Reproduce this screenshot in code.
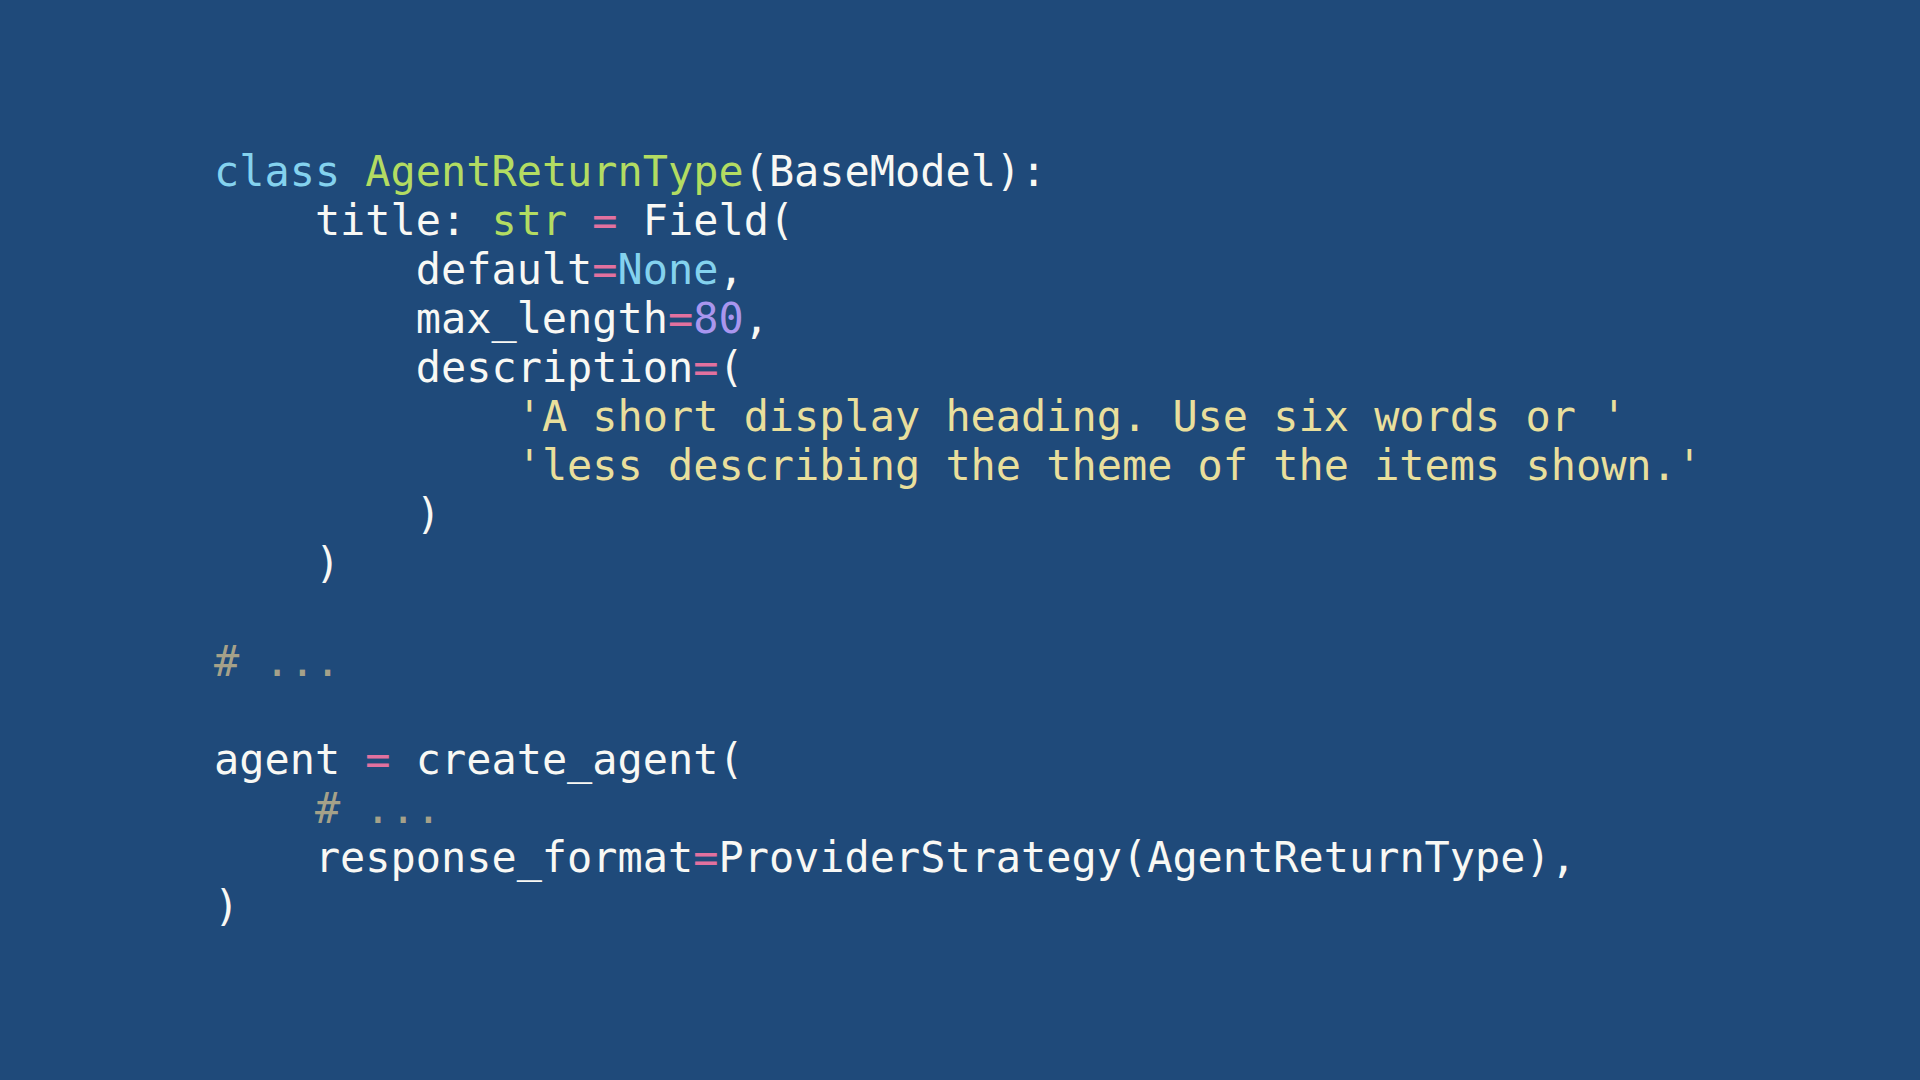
const kw = 'text-[#84d2ee]';
const cls = 'text-[#b3dc62]';
const op = 'text-[#e2719f]';
const num = 'text-[#a996ee]';
const str = 'text-[#e9df9c]';
const cmt = 'text-[#a5a189]';

const Line = ({ indent = 0, children }) => (
  <div className="h-[49px] whitespace-pre">
    {' '.repeat(indent * 4)}
    {children}
  </div>
);

export default function App() {
  return (
    <div className="w-[1920px] h-[1080px] bg-[#1f4a7a] text-[#f8f8f4] overflow-hidden">
      <div
        className="pt-[147px] pl-[214px] text-[41.9px] leading-[49px]"
        style={{ fontFamily: '"DejaVu Sans Mono", "Liberation Mono", monospace' }}
      >
        <Line>
          <span className={kw}>class</span> <span className={cls}>AgentReturnType</span>(BaseModel):
        </Line>
        <Line indent={1}>
          title: <span className={cls}>str</span> <span className={op}>=</span> Field(
        </Line>
        <Line indent={2}>
          default<span className={op}>=</span><span className={kw}>None</span>,
        </Line>
        <Line indent={2}>
          max_length<span className={op}>=</span><span className={num}>80</span>,
        </Line>
        <Line indent={2}>
          description<span className={op}>=</span>(
        </Line>
        <Line indent={3}>
          <span className={str}>'A short display heading. Use six words or '</span>
        </Line>
        <Line indent={3}>
          <span className={str}>'less describing the theme of the items shown.'</span>
        </Line>
        <Line indent={2}>)</Line>
        <Line indent={1}>)</Line>
        <Line />
        <Line>
          <span className={cmt}># ...</span>
        </Line>
        <Line />
        <Line>
          agent <span className={op}>=</span> create_agent(
        </Line>
        <Line indent={1}>
          <span className={cmt}># ...</span>
        </Line>
        <Line indent={1}>
          response_format<span className={op}>=</span>ProviderStrategy(AgentReturnType),
        </Line>
        <Line>)</Line>
      </div>
    </div>
  );
}
